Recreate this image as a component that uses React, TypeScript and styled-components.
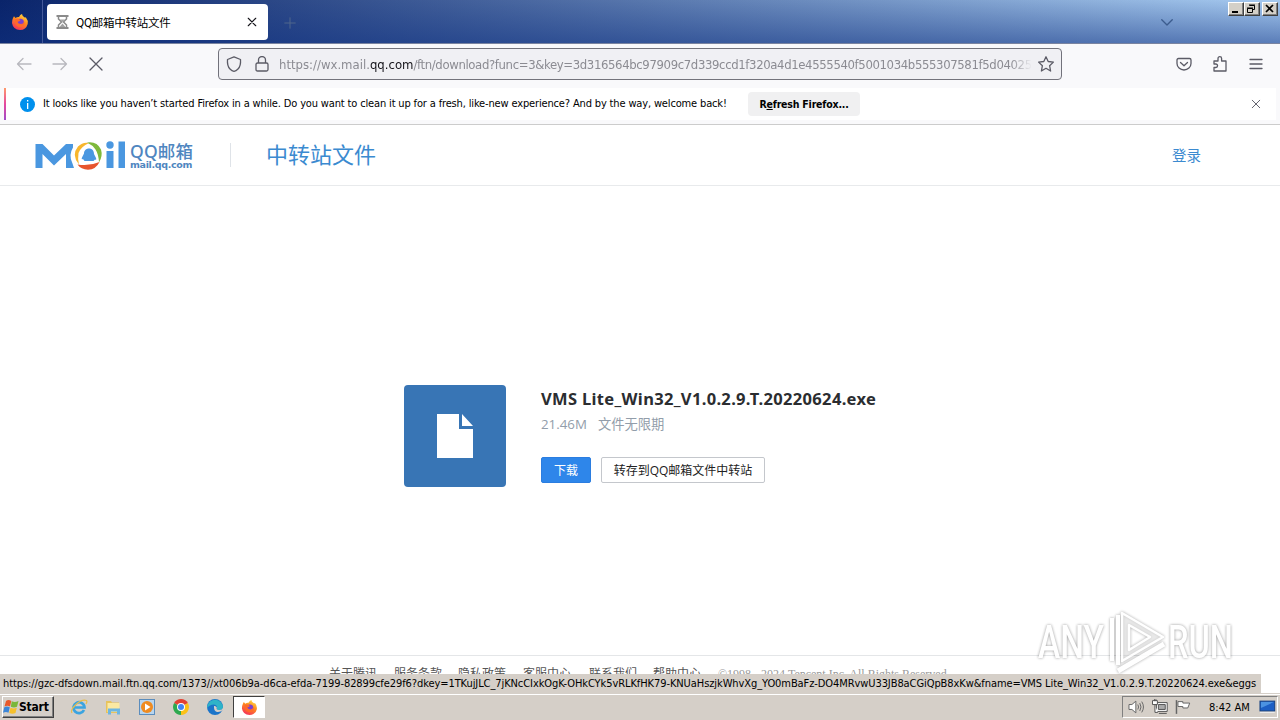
import React from 'react';
import styled, {createGlobalStyle, css} from 'styled-components';

const GlobalStyle = createGlobalStyle`
  * {
    box-sizing: border-box;
  }
  body {
    margin: 0;
    overflow: hidden;
    background: #fff;
  }
`;

const tahoma = css`
  font-family: 'DejaVu Sans Condensed', 'Noto Sans CJK SC', sans-serif;
`;

const Screen = styled.div`
  width: 1280px;
  height: 720px;
  display: flex;
  flex-direction: column;
  overflow: hidden;
  ${tahoma}
  font-size: 11px;
  color: #000;
  white-space: nowrap;
`;

/* browser title bar */

const TitleBar = styled.div`
  height: 44px;
  flex: none;
  display: flex;
  background:
    linear-gradient(to bottom, rgba(16, 50, 130, 0) 0%, rgba(16, 50, 130, 0.5) 100%),
    linear-gradient(to right, #0a246a 0%, #a6caf0 100%);
  border-bottom: 1px solid #7a84a0;
`;

const FirefoxView = styled.div`
  width: 43px;
  padding: 13px 0 0 11px;
  border-right: 1px solid #44599a;
`;

const Tab = styled.div`
  width: 221px;
  height: 36px;
  margin: 4px 0 0 4px;
  padding: 0 11px 0 9px;
  display: flex;
  align-items: center;
  background: #fff;
  border-radius: 4px;
`;

const TabTitle = styled.span`
  flex: 1;
  margin-left: 7px;
  font-size: 11.5px;
  letter-spacing: -0.25px;
`;

const NewTab = styled.div`
  padding: 17px 0 0 16px;
  flex: 1;
`;

const TabList = styled.div`
  padding: 16px 55px 0 0;
`;

const WindowButtons = styled.div`
  display: flex;
  padding: 2px 2px 0 0;
`;

const WindowButton = styled.div<{$gap?: boolean}>`
  width: 16px;
  height: 14px;
  margin-left: ${p => (p.$gap ? 2 : 0)}px;
  background: #d4d0c8;
  border: 1px solid;
  border-color: #fff #404040 #404040 #fff;
  box-shadow: inset -1px -1px #808080;
  svg {
    display: block;
  }
`;

/* navigation toolbar */

const Toolbar = styled.div`
  height: 44px;
  flex: none;
  display: flex;
  align-items: center;
  background: #f9f9fb;
  padding: 0 16px 4px;
`;

const NavButtons = styled.div`
  width: 202px;
  display: flex;
  gap: 20px;
`;

const UrlBar = styled.div`
  width: 844px;
  height: 32px;
  display: flex;
  align-items: center;
  padding: 0 7px;
  background: #f0f0f4;
  border: 1px solid #72727b;
  border-radius: 4px;
`;

const UrlText = styled.div`
  flex: 1;
  margin: 0 6px 0 9px;
  overflow: hidden;
  font-family: 'DejaVu Sans Condensed', sans-serif;
  font-size: 13px;
  color: #8b8b92;
  mask-image: linear-gradient(to left, transparent 0, #000 22px);
  b {
    font-weight: normal;
    color: #15141a;
  }
`;

const UrlPath = styled.span`
  letter-spacing: -0.37px;
`;

const ShieldSlot = styled.div`
  width: 28px;
  height: 16px;
`;

const ToolbarActions = styled.div`
  flex: 1;
  display: flex;
  justify-content: flex-end;
  gap: 20px;
`;

/* notification bar */

const Notification = styled.div`
  height: 37px;
  flex: none;
  background: #f9f9fb;
  border-bottom: 1px solid #ccc;
`;

const NotificationBody = styled.div`
  height: 32px;
  width: 1276px;
  margin-left: 4px;
  display: flex;
  align-items: center;
  background: linear-gradient(#ff9a6b, #e5489e 50%, #a04cc8) 0 0 / 2px 100% no-repeat, #fff;
  border-right: 4px solid #f9f9fb;
`;

const InfoIcon = styled.div`
  width: 15px;
  height: 15px;
  margin: 0 8px 0 16px;
  border-radius: 50%;
  background: #0090ed;
  display: flex;
  align-items: center;
  justify-content: center;
`;

const Message = styled.div`
  width: 705px;
  padding-bottom: 1px;
  letter-spacing: -0.15px;
`;

const RefreshButton = styled.div`
  width: 112px;
  height: 24px;
  line-height: 24px;
  text-align: center;
  border-radius: 4px;
  background: #f0f0f1;
  font-weight: bold;
  font-size: 10.5px;
  letter-spacing: -0.2px;
`;

const Dismiss = styled.div`
  flex: 1;
  display: flex;
  justify-content: flex-end;
  padding-right: 15px;
`;

/* web page */

const Page = styled.div`
  height: 568px;
  flex: none;
  display: flex;
  flex-direction: column;
  font-family: 'Open Sans', 'Noto Sans CJK SC', sans-serif;
`;

const PageHeader = styled.div`
  height: 61px;
  flex: none;
  display: flex;
  align-items: center;
  padding: 0 79px 0 35px;
  border-bottom: 1px solid #e8eaec;
`;

const LogoWords = styled.div`
  width: 66px;
  margin-left: 5px;
  color: #4f86c0;
`;

const LogoName = styled.div`
  font: 500 17.5px/18px 'Noto Sans', 'Noto Sans CJK SC', sans-serif;
  letter-spacing: 0.2px;
`;

const LogoDomain = styled.div`
  font: bold 9.5px/9px 'DejaVu Sans', sans-serif;
  letter-spacing: -0.34px;
`;

const PageTitle = styled.div`
  flex: 1;
  margin-left: 34px;
  padding-left: 35px;
  height: 24px;
  line-height: 22px;
  border-left: 1px solid #dfe3e8;
  font-size: 22px;
  color: #3b8ad0;
`;

const Login = styled.div`
  padding-bottom: 1px;
  font-size: 14.5px;
  color: #3b8ad0;
`;

const FileArea = styled.div`
  height: 469px;
  flex: none;
  display: flex;
  padding: 199px 0 0 404px;
`;

const FileIcon = styled.div`
  width: 102px;
  height: 102px;
  border-radius: 4px;
  background: #3875b5;
  padding: 28px 0 0 33px;
`;

const FileInfo = styled.div`
  margin-left: 35px;
`;

const FileName = styled.div`
  height: 26px;
  font: bold 16.5px/27px 'Noto Sans', sans-serif;
  letter-spacing: 0.33px;
  color: #2b2d30;
`;

const FileMeta = styled.div`
  display: flex;
  gap: 11px;
  height: 26px;
  line-height: 26px;
  font-size: 13.3px;
  color: #929daa;
`;

const FileActions = styled.div`
  display: flex;
  gap: 10px;
  margin-top: 20px;
`;

const ActionButton = styled.div<{$primary?: boolean}>`
  width: ${p => (p.$primary ? 50 : 164)}px;
  height: 26px;
  line-height: 25px;
  text-align: center;
  border: 1px solid ${p => (p.$primary ? '#2b7de0' : '#c4c7cc')};
  border-radius: 2px;
  background: ${p => (p.$primary ? '#2e86ea' : '#fff')};
  color: ${p => (p.$primary ? '#fff' : '#222')};
  font-size: 12px;
`;

const PageFooter = styled.div`
  flex: 1;
  display: flex;
  padding: 9px 0 0 329px;
  border-top: 1px solid #e4e6e8;
  font-size: 12px;
  line-height: 18px;
  color: #555;
`;

const FooterLink = styled.span<{$width: number}>`
  width: ${p => p.$width}px;
`;

const Copyright = styled.span`
  font-family: 'Liberation Serif', serif;
  color: #999;
`;

/* overlays */

const StatusPanel = styled.div`
  position: absolute;
  left: 0;
  top: 674px;
  width: 1261px;
  height: 19px;
  padding-left: 3px;
  line-height: 20px;
  letter-spacing: -0.083px;
  background: #d5cfc8;
`;

const Watermark = styled.svg`
  position: absolute;
  left: 1030px;
  top: 604px;
  opacity: 0.9;
`;

/* taskbar */

const Taskbar = styled.div`
  height: 27px;
  flex: none;
  display: flex;
  align-items: center;
  padding: 1px 2px 0;
  background: #d5cfc8;
  box-shadow: inset 0 1px #d5cfc8, inset 0 2px #fff;
`;

const StartButton = styled.div`
  width: 52px;
  height: 22px;
  display: flex;
  align-items: center;
  border: 1px solid;
  border-color: #fff #404040 #404040 #fff;
  box-shadow: inset -1px -1px #808080;
  font-weight: bold;
  font-size: 12px;
  letter-spacing: -0.2px;
`;

const QuickLaunch = styled.div`
  flex: 1;
  display: flex;
  align-items: center;
  padding-left: 8px;
`;

const TaskIcon = styled.div<{$active?: boolean}>`
  width: ${p => (p.$active ? 32 : 34)}px;
  height: 22px;
  margin-left: ${p => (p.$active ? 1 : 0)}px;
  display: flex;
  align-items: center;
  justify-content: center;
  border: 1px solid;
  border-color: ${p => (p.$active ? '#404040 #fff #fff #404040' : 'transparent')};
  background: ${p => (p.$active ? '#fff' : 'none')};
`;

const Tray = styled.div`
  width: 156px;
  height: 22px;
  display: flex;
  align-items: center;
  padding: 0 1px 0 5px;
  gap: 7px;
  border: 1px solid;
  border-color: #808080 #fff #fff #808080;
`;

const Clock = styled.span`
  width: 42px;
  margin: 0 2px 0 10px;
`;

const Stroke: React.FC<{d: string; color?: string; size?: number; width?: number}> = ({
  d,
  color = '#5b5b66',
  size = 16,
  width = 1.3,
}) => (
  <svg
    width={size}
    height={size}
    viewBox='0 0 16 16'
    fill='none'
    stroke={color}
    strokeWidth={width}
    strokeLinecap='round'
    strokeLinejoin='round'
  >
    <path d={d}/>
  </svg>
);

const FirefoxLogo: React.FC<{size?: number}> = ({size = 18}) => (
  <svg width={size} height={size} viewBox='0 0 18 18'>
    <defs>
      <linearGradient id='fox' x1='0.8' y1='0' x2='0.3' y2='1'>
        <stop offset='0' stopColor='#ffe047'/>
        <stop offset='0.45' stopColor='#ff8a1e'/>
        <stop offset='1' stopColor='#f5305c'/>
      </linearGradient>
    </defs>
    <path
      d='M2 5 L3 3.3 L4.5 5 Q6 3.8 8 4 Q9 1.5 11 1 Q11.3 3 13 4 Q14.5 5 14.8 4.2 Q17.5 7.5 16.7 11 Q15 17 9 17 Q2 16.5 1 10 Q1 7 2 5Z'
      fill='url(#fox)'
    />
    <circle cx='9.4' cy='9.3' r='3.5' fill='#7a3fd0'/>
    <path d='M3.8 6.3 Q7 5 9.5 7.3 Q8.6 8.6 6.7 8.8 Q7 11 10 11 Q12.5 11 13 8.5 Q14.8 12.7 10.5 14 Q5.2 14.6 4.2 9.5Z' fill='#ff6a2a'/>
  </svg>
);

const Hourglass = () => (
  <svg width='13' height='14' viewBox='0 0 13 14' fill='none' stroke='#8a8a8a'>
    <path d='M0.5 1h12M0.5 13h12' strokeWidth='2'/>
    <path d='M2.5 2v2l3 3-3 3v2M10.5 2v2l-3 3 3 3v2' strokeWidth='1.5'/>
    <path d='M4 4.500h5l-2.500 2.500zM3.500 12l3-3.500 3 3.500z' fill='#a2a2a2' stroke='none'/>
  </svg>
);

const MailLogo = () => (
  <svg width='90' height='30' viewBox='0 0 90 30'>
    <g fill='#4a97e0'>
      <path d='M0.500 28V4h7L19 15.500 31 4H38v3.500a16 16 0 0 0-.5 16L39 28H31V14L19 25.500 7.500 14V28Z'/>
      <circle cx='75' cy='5' r='3.700'/>
      <path d='M71.500 11h7v17h-7zM83.500 1.500h6.500V28h-6.500z'/>
      <path d='M54 8.500c3 0 5 2.200 5 5.500l2 4c.7 2-.3 2-1 1.500L58.500 21h-9L48 19c-1 .5-1.700.3-1-1.500l2-4C49 10.700 51 8.500 54 8.500Z'/>
    </g>
    <path d='M44 24.500Q36 15 43 6.500 48 1.500 54 3 46 6.500 43.500 13 42.500 19 44 24.500Z' fill='#f8b62c'/>
    <path d='M52 2.500Q62 1 66 9.500 68 16 64 22.500 63.500 14 60.500 9.500 57.500 5 52 2.500Z' fill='#7fb93b'/>
    <path d='M42.500 24.500Q54 26.500 64.500 22 61 29.500 53 29.700 46 29.500 42.500 24.500Z' fill='#e7552d'/>
  </svg>
);

const AnyRunMark = () => (
  <Watermark width='240' height='76' viewBox='0 0 240 76'>
    <g
      fill='#fff'
      fillOpacity='0.4'
      stroke='#fff'
      strokeWidth='4'
      strokeLinejoin='round'
      style={{filter: 'drop-shadow(0 0 1.5px rgba(0, 0, 0, 0.4))'}}
    >
      <path d='M82 14V57M88 11V61' fill='none'/>
      <path d='M92 9L133 33 92 57ZM99 21V46L120 33Z' fillRule='evenodd' strokeWidth='2.500'/>
      <path d='M88 67L134 40' fill='none' strokeWidth='5'/>
    </g>
    <g
      fill='#fff'
      fontFamily="'Roboto', sans-serif"
      fontSize='46'
      fontWeight='500'
      style={{filter: 'drop-shadow(0 0 1.5px rgba(0, 0, 0, 0.45))'}}
    >
      <text x='8' y='54' textLength='66' lengthAdjust='spacingAndGlyphs'>ANY</text>
      <text x='138' y='54' textLength='65' lengthAdjust='spacingAndGlyphs'>RUN</text>
    </g>
  </Watermark>
);

const WindowsFlag = () => (
  <svg width='16' height='16' viewBox='0 0 16 16'>
    <path d='M3 2q2.500-2 5.300 0L7 7.500q-2.500-1.500-5.500 0Z' fill='#e8592b'/>
    <path d='M8.800 2.300q3 1.500 6.700-.3L14 7.700q-3 1.500-6.200 0Z' fill='#7ab73a'/>
    <path d='M1.300 8.300q2.500-1.500 5.500 0L5.500 13.700q-2.500-1.500-5.500 0Z' fill='#3c86d8'/>
    <path d='M7.500 8.800q3 1.500 6.300 0L12.500 14q-3 1.500-6.300 0Z' fill='#f6c02c'/>
  </svg>
);

const ExplorerE = () => (
  <svg width='18' height='18' viewBox='0 0 18 18' fill='none'>
    <path d='M14 12A5.500 5.500 0 1 1 14.500 9.500H5' stroke='#3ba4e0' strokeWidth='2.700'/>
    <path d='M2 15Q0 12 6 6.500T16.500 2.500Q17.500 3.500 16 6' stroke='#e8bd4c' strokeWidth='1.200'/>
  </svg>
);

const Folder = () => (
  <svg width='18' height='18' viewBox='0 0 18 18'>
    <path d='M2 3h5l1 1.500h7V15H2Z' fill='#e7c35c'/>
    <path d='M3.500 5h12v9h-12Z' fill='#fbe9a2'/>
    <path d='M4 16.500V10.500h12v6h-3v-3H7v3Z' fill='#6db6e2'/>
  </svg>
);

const MediaPlayer = () => (
  <svg width='18' height='18' viewBox='0 0 18 18'>
    <rect x='1.500' y='1.500' width='15' height='15' fill='#b8d5ee' stroke='#5b8dbd'/>
    <circle cx='9' cy='9' r='6' fill='#ef8b20'/>
    <path d='M7 5.500L12.500 9 7 12.500Z' fill='#fff'/>
  </svg>
);

const Chrome = () => (
  <svg width='18' height='18' viewBox='0 0 18 18'>
    <path d='M9 9L2.100 5A8 8 0 0 1 15.900 5Z' fill='#e34133'/>
    <path d='M9 9L15.900 5A8 8 0 0 1 9 17Z' fill='#fbc116'/>
    <path d='M9 9L9 17A8 8 0 0 1 2.100 5Z' fill='#2da94f'/>
    <circle cx='9' cy='9' r='4' fill='#fff'/>
    <circle cx='9' cy='9' r='3' fill='#4285f4'/>
  </svg>
);

const Edge = () => (
  <svg width='18' height='18' viewBox='0 0 18 18'>
    <circle cx='9' cy='9' r='8' fill='#1b74c9'/>
    <path d='M1.200 8A8 8 0 0 1 17 9.500Q16.500 12 13 12 10.500 12 11 10.500 11.500 7 8 6.500 3.500 6.500 1.200 10Z' fill='#2fb3c8'/>
    <path d='M8 8Q7.500 13 11 14 14 14.500 17 12 18 10 17.300 9.500 16 12.500 12.500 12 10 11.500 10.800 9.500 10 7.500 8 8Z' fill='#d5cfc8'/>
  </svg>
);

const Speaker = () => (
  <svg width='17' height='16' viewBox='0 0 17 16' fill='#fff' stroke='#666'>
    <path d='M1 5.500h3L8 2v12L4 10.500H1Z'/>
    <path d='M10 5.500q1.500 2.500 0 5M12 4q2.500 4 0 8M14 2.500q3.500 5.500 0 11' fill='none'/>
  </svg>
);

const Network = () => (
  <svg width='17' height='16' viewBox='0 0 17 16' fill='#fff' stroke='#555'>
    <path d='M4.500 3.500h11v9h-11Z'/>
    <path d='M6.500 5.500h7v5h-7Z' fill='#aaa'/>
    <path d='M7 14.500h8'/>
    <path d='M.5 1.500h5v4h-5ZM2.500 0v2M4 0v2M3 6v7.500h3'/>
  </svg>
);

const Flag = () => (
  <svg width='17' height='16' viewBox='0 0 17 16' fill='#fff' stroke='#666'>
    <path d='M1.500 1v14' strokeWidth='1.500'/>
    <path d='M3 2.500h5v1.500h7l-2 5H8V7.500H3Z'/>
  </svg>
);

const Desktop = () => (
  <svg width='17' height='16' viewBox='0 0 17 16'>
    <rect x='1' y='2' width='15' height='10' fill='#1c5ec4' stroke='#16407f'/>
    <path d='M2 3h13L2 9Z' fill='#4b92e2'/>
    <path d='M1 13.500h15' stroke='#eee'/>
  </svg>
);

const cross = 'M2 2L14 14M14 2L2 14';

const footerLinks: [string, number][] = [
  ['关于腾讯', 65],
  ['服务条款', 64],
  ['隐私政策', 65],
  ['客服中心', 66],
  ['联系我们', 64],
  ['帮助中心', 65],
];

const App: React.FC = () => {
  return (
    <Screen>
      <GlobalStyle/>
      <TitleBar>
        <FirefoxView><FirefoxLogo/></FirefoxView>
        <Tab>
          <Hourglass/>
          <TabTitle>QQ邮箱中转站文件</TabTitle>
          <Stroke d={cross} size={10} color='#15141a' width={1.8}/>
        </Tab>
        <NewTab><Stroke d='M8 1V15M1 8H15' size={12} color='#50688c'/></NewTab>
        <TabList><Stroke d='M1 5L8 12L15 5' size={12} color='#3c5c8e' width={1.8}/></TabList>
        <WindowButtons>
          <WindowButton>
            <svg width='14' height='12'><path d='M3 8h6v2H3z'/></svg>
          </WindowButton>
          <WindowButton>
            <svg width='14' height='12' fill='none' stroke='#000'>
              <path d='M4.500 2.500h5v4h-2M4 2h6M2.500 5.500h5v4h-5zM2 5h6'/>
            </svg>
          </WindowButton>
          <WindowButton $gap>
            <svg width='14' height='12' stroke='#000' strokeWidth='1.700'>
              <path d='M3 2L10 9M10 2L3 9'/>
            </svg>
          </WindowButton>
        </WindowButtons>
      </TitleBar>

      <Toolbar>
        <NavButtons>
          <Stroke d='M15 8H1.500M7 2.500L1.500 8L7 13.500' color='#b8b8be'/>
          <Stroke d='M1 8H14.500M9 2.500L14.500 8L9 13.500' color='#b8b8be'/>
          <Stroke d={cross}/>
        </NavButtons>
        <UrlBar>
          <ShieldSlot>
            <Stroke d='M8 .8L14.500 3.500Q15 10 12 13Q10 15 8 15.300Q6 15 4 13Q1 10 1.500 3.500Z'/>
          </ShieldSlot>
          <Stroke d='M3.500 7h9q1.500 0 1.500 1.500v5q0 1.500-1.500 1.500h-9Q2 15 2 13.500V8.500q0-1.500 1.500-1.500ZM4.500 7V4a3.500 3.500 0 0 1 7 0V7'/>
          <UrlText>
            https://wx.mail.<b>qq.com</b>
            <UrlPath>/ftn/download?func=3&amp;key=3d316564bc97909c7d339ccd1f320a4d1e4555540f5001034b555307581f5d04025</UrlPath>
          </UrlText>
          <Stroke d='M8 .8L10.200 5.500L15.400 6.100L11.600 9.700L12.600 15L8 12.300L3.400 15L4.400 9.700L.6 6.100L5.800 5.500Z'/>
        </UrlBar>
        <ToolbarActions>
          <Stroke d='M2.500 2.500h11q1.500 0 1.500 1.500v3.500a7 6.500 0 0 1-14 0V4q0-1.500 1.500-1.500ZM4.500 6.500L8 9.800L11.500 6.500'/>
          <Stroke d='M2 5h4V2.500a1.800 1.800 0 0 1 3.600 0V5H14v10H2v-3.500h1.800a1.700 1.700 0 0 0 0-3.500H2Z'/>
          <Stroke d='M2 3.500H14M2 8H14M2 12.500H14'/>
        </ToolbarActions>
      </Toolbar>

      <Notification>
        <NotificationBody>
          <InfoIcon>
            <svg width='3' height='9' fill='#fff'><path d='M1 0h1.300v1.500H1zM1 3h1.300v6H1z'/></svg>
          </InfoIcon>
          <Message>
            It looks like you haven’t started Firefox in a while. Do you want to clean it up for a fresh, like-new experience? And by the way, welcome back!
          </Message>
          <RefreshButton>R<u>e</u>fresh Firefox...</RefreshButton>
          <Dismiss><Stroke d={cross} size={10} width={1.500}/></Dismiss>
        </NotificationBody>
      </Notification>

      <Page>
        <PageHeader>
          <MailLogo/>
          <LogoWords>
            <LogoName>QQ邮箱</LogoName>
            <LogoDomain>mail.qq.com</LogoDomain>
          </LogoWords>
          <PageTitle>中转站文件</PageTitle>
          <Login>登录</Login>
        </PageHeader>
        <FileArea>
          <FileIcon>
            <svg width='36' height='45' fill='#fff'>
              <path d='M0 1h22v15h14v29H0ZM25 1L36 13H25Z'/>
            </svg>
          </FileIcon>
          <FileInfo>
            <FileName>VMS Lite_Win32_V1.0.2.9.T.20220624.exe</FileName>
            <FileMeta>
              <span>21.46M</span>
              <span>文件无限期</span>
            </FileMeta>
            <FileActions>
              <ActionButton $primary>下载</ActionButton>
              <ActionButton>转存到QQ邮箱文件中转站</ActionButton>
            </FileActions>
          </FileInfo>
        </FileArea>
        <PageFooter>
          {footerLinks.map(([label, width]) => (
            <FooterLink key={label} $width={width}>{label}</FooterLink>
          ))}
          <Copyright>©1998 - 2024 Tencent Inc. All Rights Reserved</Copyright>
        </PageFooter>
      </Page>

      <Taskbar>
        <StartButton><WindowsFlag/>Start</StartButton>
        <QuickLaunch>
          <TaskIcon><ExplorerE/></TaskIcon>
          <TaskIcon><Folder/></TaskIcon>
          <TaskIcon><MediaPlayer/></TaskIcon>
          <TaskIcon><Chrome/></TaskIcon>
          <TaskIcon><Edge/></TaskIcon>
          <TaskIcon $active><FirefoxLogo size={17}/></TaskIcon>
        </QuickLaunch>
        <Tray>
          <Speaker/>
          <Network/>
          <Flag/>
          <Clock>8:42 AM</Clock>
          <Desktop/>
        </Tray>
      </Taskbar>

      <StatusPanel>
        https://gzc-dfsdown.mail.ftn.qq.com/1373//xt006b9a-d6ca-efda-7199-82899cfe29f6?dkey=1TKujJLC_7jKNcCIxkOgK-OHkCYk5vRLKfHK79-KNUaHszjkWhvXg_YO0mBaFz-DO4MRvwU33JB8aCGiQpB8xKw&amp;fname=VMS Lite_Win32_V1.0.2.9.T.20220624.exe&amp;eggs
      </StatusPanel>
      <AnyRunMark/>
    </Screen>
  );
};

export default App;
